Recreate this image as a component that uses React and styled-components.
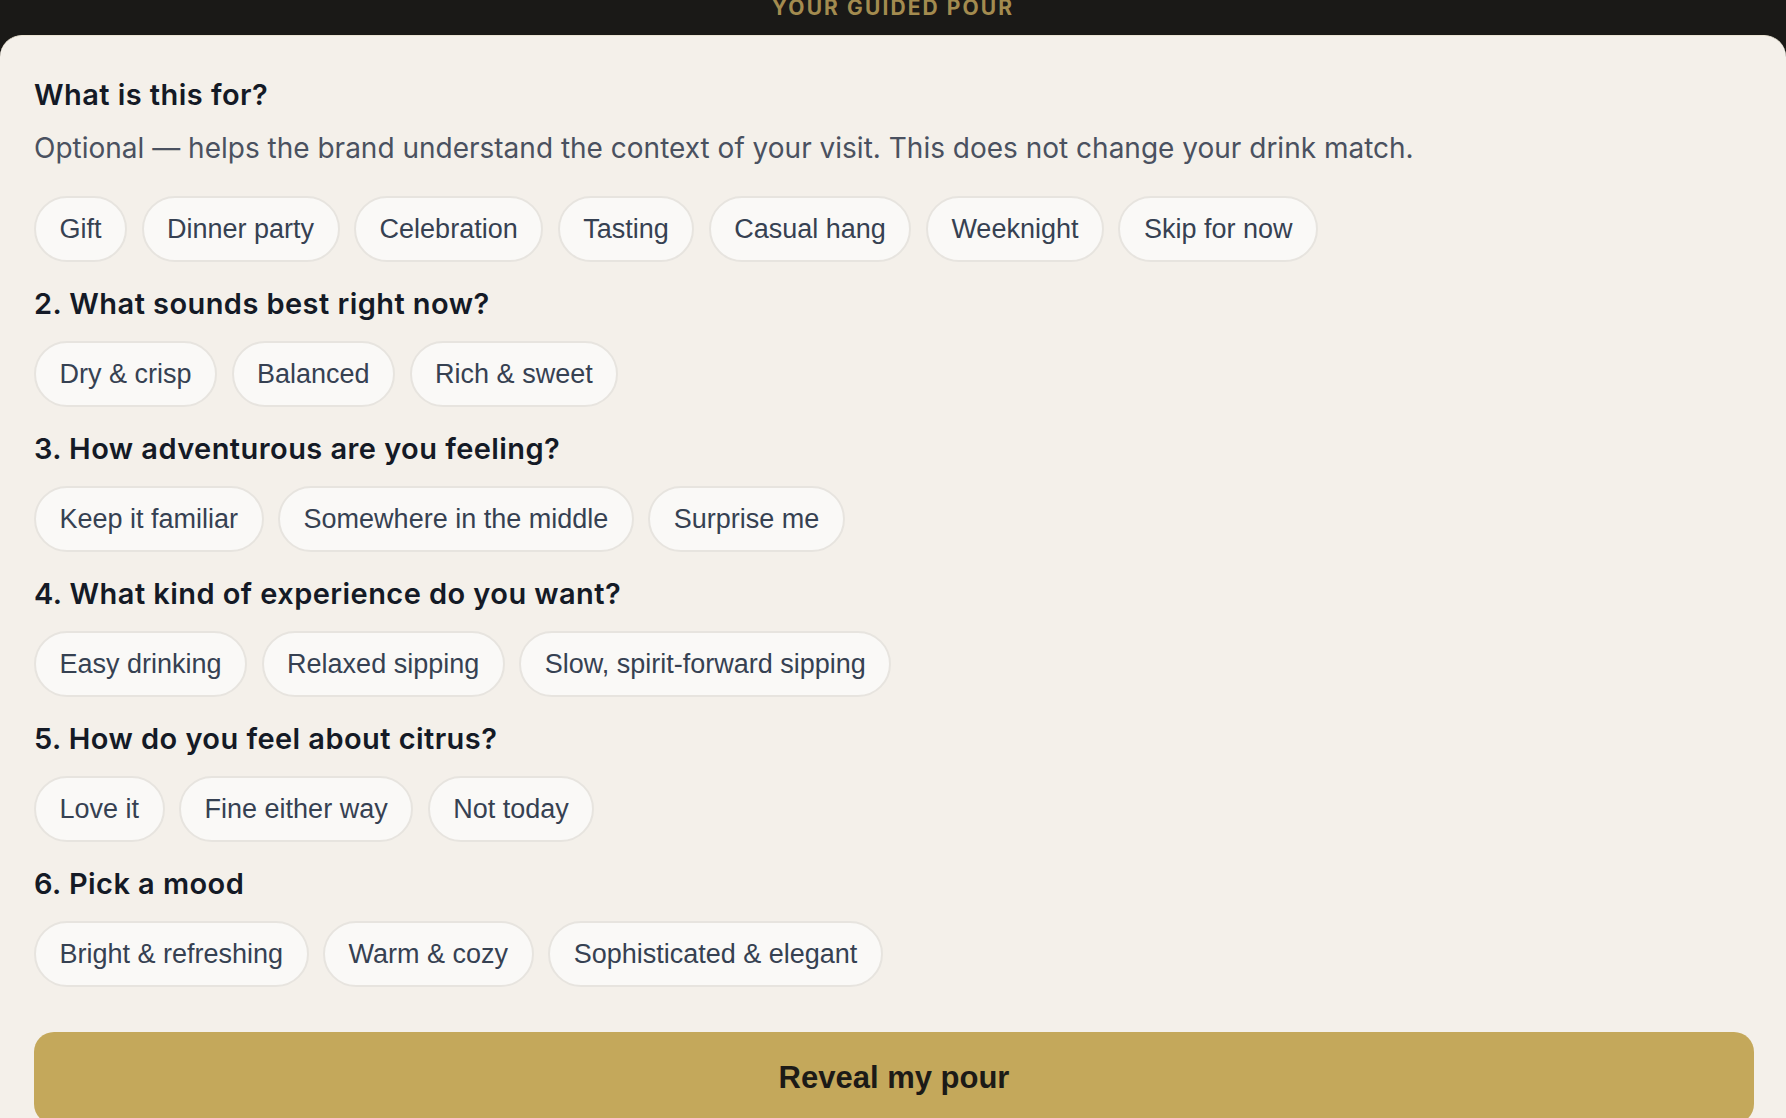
import React from 'react';
import styled, { createGlobalStyle } from 'styled-components';

const GlobalStyle = createGlobalStyle`
    html, body {
        margin: 0;
        padding: 0;
        background: #1a1917;
        overflow: hidden;
    }
    * { box-sizing: border-box; }
`;

const Page = styled.div`
    min-height: 100vh;
    display: flex;
    flex-direction: column;
`;

const TopBar = styled.header`
    height: 35px;
    display: flex;
    justify-content: center;
`;

const BarTitle = styled.span`
    font-family: Inter, "Noto Sans", sans-serif;
    font-weight: 700;
    font-size: 21px;
    line-height: 16px;
    letter-spacing: 0.1em;
    color: #a38b4f;
    text-transform: uppercase;
`;

const Panel = styled.main`
    flex: 1;
    background: #f4f0ea;
    border-top: 1px solid #ebe4d4;
    border-radius: 22px 22px 0 0;
    padding: 42px 32px 0 34px;
    display: flex;
    flex-direction: column;
    gap: 25px;
`;

const Section = styled.section`
    display: flex;
    flex-direction: column;
    gap: ${p => (p.$intro ? '0' : '20px')};
`;

const Question = styled.h2`
    margin: 0;
    font-family: Inter, "Noto Sans", sans-serif;
    font-weight: 600;
    font-size: 29px;
    line-height: 34px;
    letter-spacing: 0.015em;
    color: #141a26;
`;

const Hint = styled.p`
    margin: 17px 0 28px;
    font-family: Inter, "Noto Sans", sans-serif;
    font-weight: 400;
    font-size: 28px;
    line-height: 39px;
    color: #4a5160;
`;

const Chips = styled.div`
    display: flex;
    flex-wrap: wrap;
    gap: 14.5px;
`;

const Chip = styled.button`
    font-family: "Liberation Sans", Arial, sans-serif;
    font-size: 27px;
    line-height: 32px;
    color: #364152;
    background: #faf9f7;
    border: 2px solid #e7e4df;
    border-radius: 999px;
    padding: 15px 23.5px;
    cursor: pointer;

    &:hover {
        border-color: #c4a85b;
    }
`;

const Reveal = styled.button`
    margin-top: 20px;
    width: 100%;
    height: 92px;
    flex-shrink: 0;
    border: none;
    border-radius: 20px;
    background: #c4a85b;
    color: #1c1a17;
    font-family: "Liberation Sans", Arial, sans-serif;
    font-weight: 700;
    font-size: 31px;
    cursor: pointer;
`;

const questions = [
    { title: '2. What sounds best right now?', options: ['Dry & crisp', 'Balanced', 'Rich & sweet'] },
    { title: '3. How adventurous are you feeling?', options: ['Keep it familiar', 'Somewhere in the middle', 'Surprise me'] },
    { title: '4. What kind of experience do you want?', options: ['Easy drinking', 'Relaxed sipping', 'Slow, spirit-forward sipping'] },
    { title: '5. How do you feel about citrus?', options: ['Love it', 'Fine either way', 'Not today'] },
    { title: '6. Pick a mood', options: ['Bright & refreshing', 'Warm & cozy', 'Sophisticated & elegant'] },
];

const occasions = ['Gift', 'Dinner party', 'Celebration', 'Tasting', 'Casual hang', 'Weeknight', 'Skip for now'];

export default function App() {
    return (
        <Page>
            <GlobalStyle />
            <TopBar>
                <BarTitle>Your guided pour</BarTitle>
            </TopBar>
            <Panel>
                <Section $intro>
                    <Question>What is this for?</Question>
                    <Hint>Optional — helps the brand understand the context of your visit. This does not change your drink match.</Hint>
                    <Chips>
                        {occasions.map(o => <Chip key={o}>{o}</Chip>)}
                    </Chips>
                </Section>
                {questions.map(q => (
                    <Section key={q.title}>
                        <Question>{q.title}</Question>
                        <Chips>
                            {q.options.map(o => <Chip key={o}>{o}</Chip>)}
                        </Chips>
                    </Section>
                ))}
                <Reveal>Reveal my pour</Reveal>
            </Panel>
        </Page>
    );
}
